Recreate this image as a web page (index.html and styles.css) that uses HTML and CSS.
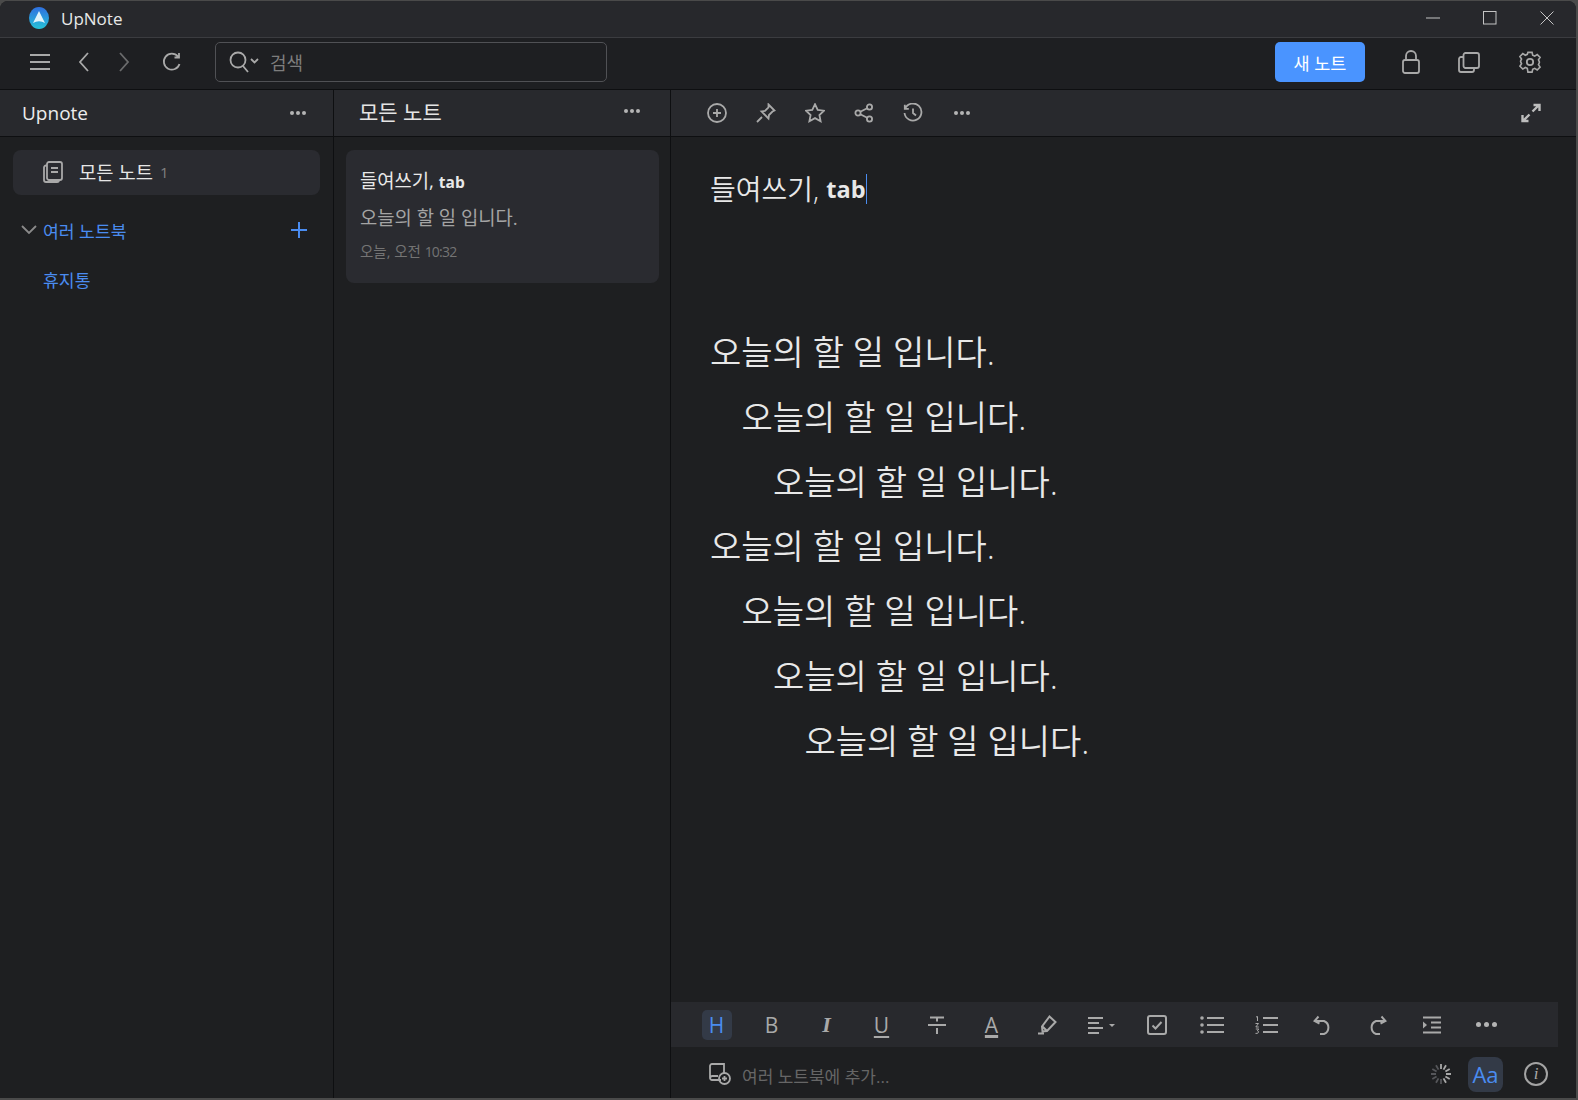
FILE: index.html
```html
<!DOCTYPE html>
<html lang="ko">
<head>
  <meta charset="UTF-8">
  <title>UpNote</title>
  <link rel="stylesheet" href="styles.css">
</head>
<body>
  <div class="window">
    <div class="titlebar">
      <svg class="logo" width="20" height="22" viewBox="0 0 20 22">
        <defs>
          <linearGradient id="logoBg" x1="0" y1="0" x2="0" y2="1">
            <stop offset="0" stop-color="#2f6fe0"/>
            <stop offset="1" stop-color="#27c3d8"/>
          </linearGradient>
        </defs>
        <ellipse cx="10" cy="11" rx="10" ry="11" fill="url(#logoBg)"/>
        <path d="M10 4 L16 16 Q10 12.5 4 16 Z" fill="#dff3fb"/>
      </svg>
      <span class="app-name">UpNote</span>
      <div class="win-controls">
        <svg width="14" height="14" viewBox="0 0 14 14"><path d="M0 7h14"/></svg>
        <svg width="14" height="14" viewBox="0 0 14 14"><rect x=".5" y=".5" width="12.5" height="12.5"/></svg>
        <svg width="14" height="14" viewBox="0 0 14 14"><path d="M.5.5l13 13M13.500.5l-13 13"/></svg>
      </div>
    </div>

    <div class="toolbar">
      <div class="nav-icons">
        <svg width="20" height="18" viewBox="0 0 20 18"><path d="M0 2h20M0 9h20M0 16h20"/></svg>
        <svg class="nav-back" width="12" height="20" viewBox="0 0 12 20"><path d="M10 1L2 10l8 9"/></svg>
        <svg class="nav-fwd" width="12" height="20" viewBox="0 0 12 20"><path d="M2 1l8 9-8 9"/></svg>
        <svg class="nav-reload" width="20" height="20" viewBox="0 0 20 20"><path d="M17.500 12a8 8 0 1 1-1.500-7.500M17 1v4.500h-4.500"/></svg>
      </div>
      <div class="search">
        <svg width="30" height="22" viewBox="0 0 30 22"><circle cx="9" cy="9" r="7.500"/><path d="M14 15l5 6M22 8l3.500 3.500L29 8"/></svg>
        <span>검색</span>
      </div>
      <button class="new-note">새 노트</button>
      <div class="tool-icons">
        <svg width="18" height="24" viewBox="0 0 18 24"><rect x="1" y="10" width="16" height="13" rx="2"/><path d="M4 10V6a5 5 0 0 1 10 0v4"/></svg>
        <svg width="22" height="21" viewBox="0 0 22 21"><rect x="5.500" y="1" width="15.500" height="15" rx="2"/><path d="M5.500 5H3a2 2 0 0 0-2 2v11a2 2 0 0 0 2 2h11a2 2 0 0 0 2-2v-2"/></svg>
        <svg width="24" height="24" viewBox="0 0 24 24"><circle cx="12" cy="12" r="3.200"/><path d="M9.700 1.500h4.600l.7 3.200 2.200 1 2.800-1.800 3.200 3.200-1.800 2.800 1 2.200 0 .4v0l0 .4-1 2.200 1.800 2.800-3.200 3.200-2.800-1.800-2.200 1-.7 3.200H9.700L9 19.300l-2.200-1L4 20.100.8 16.900l1.800-2.800-1-2.200V11.100l1-2.200L.8 6.100 4 2.900l2.800 1.800 2.200-1z" transform="translate(1.200 1) scale(.9)"/></svg>
      </div>
    </div>

    <div class="main">
      <aside class="sidebar">
        <div class="pane-head">
          <span class="brand">Upnote</span>
          <span class="dots"><i></i><i></i><i></i></span>
        </div>
        <div class="side-body">
          <div class="side-item">
            <svg width="20" height="22" viewBox="0 0 20 22"><rect x="4" y="1" width="15" height="18" rx="2"/><path d="M4 4.500H3a2 2 0 0 0-2 2V19a2 2 0 0 0 2 2h11a2 2 0 0 0 2-2M8 7h7M8 11h7"/></svg>
            <span>모든 노트</span>
            <em>1</em>
          </div>
          <div class="notebooks">
            <svg class="chev" width="16" height="10" viewBox="0 0 16 10"><path d="M1 1l7 7 7-7"/></svg>
            <span>여러 노트북</span>
            <svg class="plus" width="16" height="16" viewBox="0 0 16 16"><path d="M8 0v16M0 8h16"/></svg>
          </div>
          <div class="trash">휴지통</div>
        </div>
      </aside>

      <section class="list">
        <div class="pane-head list-head">
          <span class="list-title">모든 노트</span>
          <span class="dots"><i></i><i></i><i></i></span>
        </div>
        <div class="list-body">
          <div class="note-card">
            <div class="note-title">들여쓰기, <b>tab</b></div>
            <div class="note-sub">오늘의 할 일 입니다.</div>
            <div class="note-date">오늘, 오전 <span>10:32</span></div>
          </div>
        </div>
      </section>

      <section class="editor">
        <div class="pane-head editor-head">
          <svg width="20" height="20" viewBox="0 0 20 20"><circle cx="10" cy="10" r="9"/><path d="M10 6v8M6 10h8"/></svg>
          <svg width="20" height="20" viewBox="0 0 20 20"><path d="M12.500 1.500l6 6-2 1-3.500 3.500-.5 3.500-7-7 3.500-.5 3.500-3.500zM6 14l-5 5"/></svg>
          <svg width="20" height="20" viewBox="0 0 20 20"><path d="M10 1.200l2.700 5.700 6.300.8-4.600 4.300 1.200 6.200-5.600-3.100-5.600 3.100 1.200-6.200L1 7.700l6.300-.8z"/></svg>
          <svg width="20" height="20" viewBox="0 0 20 20"><circle cx="4" cy="10" r="2.600"/><circle cx="15.500" cy="4" r="2.600"/><circle cx="15.500" cy="16" r="2.600"/><path d="M6.300 8.800l6.900-3.600M6.300 11.200l6.900 3.600"/></svg>
          <svg width="20" height="20" viewBox="0 0 20 20"><path d="M2.200 5.500A8.500 8.500 0 1 1 1.500 10M1.800 1.800v4h4M10 5.500V10l3 2.500"/></svg>
          <span class="dots"><i></i><i></i><i></i></span>
          <svg class="expand" width="20" height="20" viewBox="0 0 20 20"><path d="M11.500 8.500l6-6M12.500 2h6v6M8.500 11.500l-6 6M7.500 18h-6v-6"/></svg>
        </div>

        <div class="doc">
          <div class="doc-title">들여쓰기, <b>tab</b><span class="caret"></span></div>
          <div class="doc-body">
            <p>오늘의 할 일 입니다.</p>
            <p class="in1">오늘의 할 일 입니다.</p>
            <p class="in2">오늘의 할 일 입니다.</p>
            <p>오늘의 할 일 입니다.</p>
            <p class="in1">오늘의 할 일 입니다.</p>
            <p class="in2">오늘의 할 일 입니다.</p>
            <p class="in3">오늘의 할 일 입니다.</p>
          </div>
        </div>

        <div class="format-bar">
          <span class="fmt active">H</span>
          <span class="fmt">B</span>
          <span class="fmt ital">I</span>
          <span class="fmt under">U</span>
          <span class="fmt"><svg width="20" height="20" viewBox="0 0 20 20"><path d="M3 2.500h14M10 2.500v4M1 10h18M10 13v6"/></svg></span>
          <span class="fmt color-a">A</span>
          <span class="fmt"><svg width="20" height="20" viewBox="0 0 20 20"><path d="M12.500 1.500l6 5.500-8.500 9-4.500.5-.5-5zM5.500 11.500l5 5M1 18.500h6"/></svg></span>
          <span class="fmt"><svg width="28" height="18" viewBox="0 0 28 18"><path d="M0 2h15M0 7h11M0 12h15M0 17h11"/><path class="solid" d="M21 8h6l-3 3z"/></svg></span>
          <span class="fmt"><svg width="20" height="20" viewBox="0 0 20 20"><rect x="1" y="1" width="18" height="18" rx="2"/><path d="M5.500 10.500l3 3 6-6.500"/></svg></span>
          <span class="fmt"><svg width="24" height="18" viewBox="0 0 24 18"><circle class="solid" cx="2" cy="2" r="1.800"/><circle class="solid" cx="2" cy="9" r="1.800"/><circle class="solid" cx="2" cy="16" r="1.800"/><path d="M7 2h17M7 9h17M7 16h17"/></svg></span>
          <span class="fmt"><svg width="24" height="18" viewBox="0 0 24 18"><path d="M8 2h15M8 9h15M8 16h15"/><path class="thin" d="M1 1l1.500-.5V5M.5 7.500h3L.8 11h3M.8 13h3l-1.500 1.800c2 0 2 3-1.800 2.600"/></svg></span>
          <span class="fmt undo"><svg width="20" height="20" viewBox="0 0 20 20"><path d="M5.500 1.500L1.500 6l5 2.500M2 6h9a7 7 0 0 1 0 13H7"/></svg></span>
          <span class="fmt"><svg width="20" height="20" viewBox="0 0 20 20"><path d="M14.500 1.500l4 4.500-5 2.500M18 6H9a7 7 0 0 0 0 13h4"/></svg></span>
          <span class="fmt"><svg width="18" height="18" viewBox="0 0 18 18"><path d="M0 1.500h18M8 6.500h10M8 11.500h10M0 16.500h18"/><path class="solid" d="M0 5.500l4 3.500-4 3.500z"/></svg></span>
          <span class="fmt"><span class="dots big"><i></i><i></i><i></i></span></span>
        </div>

        <div class="status-bar">
          <svg width="22" height="22" viewBox="0 0 22 22"><path d="M12 17H3a2 2 0 0 1-2-2V3a2 2 0 0 1 2-2h12v10M1 15a2.500 2.500 0 0 1 2-2h6"/><circle cx="15.500" cy="15.500" r="5.500"/><path d="M15.500 13v5M13 15.500h5"/></svg>
          <span class="status-text">여러 노트북에 추가...</span>
          <svg class="spinner" width="22" height="22" viewBox="0 0 22 22"><path d="M11 1v5M16 2.300l-2.500 4.300M19.700 6l-4.300 2.500M21 11h-5M19.700 16l-4.300-2.500M16 19.700l-2.500-4.300"/><path class="faint" d="M11 21v-5M6 19.700l2.500-4.300M2.300 16l4.300-2.500M1 11h5M2.300 6l4.300 2.500M6 2.300l2.500 4.300"/></svg>
          <span class="aa">Aa</span>
          <span class="info">i</span>
        </div>
      </section>
    </div>
  </div>
</body>
</html>
```

FILE: styles.css
```css
* {
  box-sizing: border-box;
}

html, body {
  height: 100%;
}

body {
  margin: 0;
  background: #4a4a4a;
  font-family: "Open Sans", "Noto Sans CJK KR", sans-serif;
  overflow: hidden;
}

svg {
  fill: none;
  stroke: #a9a9a9;
  stroke-width: 1.800;
  flex: none;
  display: block;
}

svg .solid {
  fill: #a9a9a9;
  stroke: none;
}

svg .thin {
  stroke-width: 1;
}

.window {
  width: 1576px;
  height: 1097px;
  margin-top: 1px;
  background: #1e1f21;
  border-radius: 8px 8px 0 0;
  display: flex;
  flex-direction: column;
  overflow: hidden;
}

/* title bar */
.titlebar {
  height: 37px;
  flex: none;
  display: flex;
  align-items: center;
  padding: 0 0 2px 29px;
  background: #27282c;
  border-bottom: 1px solid #3b3c40;
}

.logo {
  stroke: none;
}

.app-name {
  margin-left: 12px;
  font-size: 17px;
  color: #e8e8e8;
}

.win-controls {
  margin-left: auto;
  display: flex;
  gap: 43px;
  padding-right: 22px;
}

.win-controls svg {
  stroke: #c4c4c4;
  stroke-width: 1;
}

/* top toolbar */
.toolbar {
  height: 52px;
  flex: none;
  display: flex;
  align-items: center;
  background: #1e1f22;
  border-bottom: 1px solid #0e0f11;
  padding: 0 0 3px 30px;
}

.nav-icons {
  display: flex;
  align-items: center;
}

.nav-back {
  margin-left: 28px;
}

.nav-fwd {
  margin-left: 28px;
  opacity: .55;
}

.nav-reload {
  margin-left: 32px;
}

.search {
  width: 392px;
  height: 40px;
  margin-left: 33px;
  padding-left: 13px;
  display: flex;
  align-items: center;
  gap: 11px;
  border: 1px solid #505155;
  border-radius: 5px;
  font-size: 18px;
  color: #7d7d7d;
}

.new-note {
  margin-left: auto;
  width: 90px;
  height: 40px;
  border: none;
  border-radius: 5px;
  background: #4a94ff;
  color: #fff;
  font: inherit;
  font-size: 17.500px;
}

.tool-icons {
  display: flex;
  align-items: center;
  margin-left: 37px;
  padding-right: 34px;
  gap: 38px;
}

/* panes */
.main {
  flex: 1;
  display: flex;
  min-height: 0;
}

.pane-head {
  height: 47px;
  flex: none;
  display: flex;
  align-items: center;
  background: #28292d;
  border-bottom: 1px solid #0e0f11;
}

.dots {
  display: flex;
  gap: 2px;
  margin-left: auto;
}

.dots i {
  width: 4px;
  height: 4px;
  border-radius: 50%;
  background: #b4b4b4;
}

.dots.big {
  margin: 0;
  gap: 3px;
}

.dots.big i {
  width: 5px;
  height: 5px;
}

.sidebar {
  width: 334px;
  flex: none;
  display: flex;
  flex-direction: column;
  border-right: 1px solid #0e0f11;
}

.sidebar .pane-head {
  padding: 0 27px 0 22px;
}

.brand {
  font-size: 19px;
  color: #ececec;
}

.side-body {
  padding: 13px 13px;
}

.side-item {
  height: 45px;
  display: flex;
  align-items: center;
  padding: 0 0 2px 30px;
  background: #2a2b30;
  border-radius: 8px;
  color: #e6e6e6;
  font-size: 18.800px;
}

.side-item span {
  margin-left: 16px;
}

.side-item em {
  margin-left: 7px;
  font-style: normal;
  font-size: 15px;
  color: #808080;
}

.notebooks {
  display: flex;
  align-items: center;
  margin-top: 23px;
  padding: 0 13px 0 8px;
  height: 24px;
  font-size: 17.200px;
  color: #4a8cf0;
}

.notebooks .chev {
  stroke: #8a8a8a;
}

.notebooks span {
  margin-left: 6px;
}

.plus {
  margin-left: auto;
  stroke: #4a8cf0;
  stroke-width: 2;
}

.trash {
  margin: 25px 0 0 30px;
  font-size: 17.200px;
  color: #4a8cf0;
}

.list {
  width: 337px;
  flex: none;
  display: flex;
  flex-direction: column;
  border-right: 1px solid #0e0f11;
}

.list-head {
  padding: 0 30px 4px 25px;
}

.list-title {
  font-size: 21px;
  color: #e4e4e4;
}

.list-body {
  padding: 13px 11px 0 12px;
}

.note-card {
  height: 133px;
  padding: 17px 14px;
  background: #2a2b30;
  border-radius: 8px;
}

.note-title {
  font-size: 18.800px;
  line-height: 28px;
  color: #e8e8e8;
}

.note-title b {
  font-size: 15.500px;
  font-weight: 700;
}

.note-sub {
  margin-top: 8px;
  font-size: 18.800px;
  line-height: 28px;
  color: #a4a4a4;
}

.note-date {
  margin-top: 10px;
  font-size: 14.500px;
  line-height: 20px;
  color: #747474;
}

.note-date span {
  font-size: 14px;
  letter-spacing: -.8px;
}

.editor {
  flex: 1;
  min-width: 0;
  display: flex;
  flex-direction: column;
}

.editor-head {
  padding: 0 35px 0 36px;
  gap: 29px;
}

.editor-head .dots {
  margin-left: 0;
  padding-left: 2px;
}

.editor-head .expand {
  margin-left: auto;
  stroke: #bdbdbd;
  stroke-width: 2.400;
}

.doc {
  flex: 1;
  padding: 32px 39px;
  color: #e8e8e8;
}

.doc-title {
  font-size: 28px;
  line-height: 40px;
  font-weight: 350;
  display: flex;
  align-items: center;
  white-space: pre;
}

.doc-title b {
  font-size: 23.500px;
  font-weight: 700;
}

.caret {
  width: 1px;
  height: 30px;
  background: #4a8cf0;
}

.doc-body {
  margin-top: 111px;
}

.doc-body p {
  margin: 0;
  font-size: 34px;
  line-height: 64.800px;
  font-weight: 350;
}

.doc-body .in1 {
  padding-left: 31.500px;
}

.doc-body .in2 {
  padding-left: 63px;
}

.doc-body .in3 {
  padding-left: 94.500px;
}

/* bottom bars */
.format-bar {
  width: 887px;
  height: 45px;
  flex: none;
  display: flex;
  align-items: center;
  padding-left: 18px;
  background: #28292d;
}

.format-bar svg {
  stroke-width: 2;
}

.format-bar svg .thin {
  stroke-width: 1;
}

.fmt {
  width: 55px;
  height: 30px;
  flex: none;
  display: flex;
  align-items: center;
  justify-content: center;
  font-size: 21px;
  color: #a9a9a9;
}

.fmt.active {
  width: 30px;
  margin: 0 12.500px;
  border-radius: 5px;
  background: #333a47;
  color: #4a8cf0;
}

.fmt.ital {
  font-style: italic;
  font-weight: 700;
  font-family: "Liberation Serif", serif;
  font-size: 22px;
}

.fmt.under {
  text-decoration: underline;
  text-underline-offset: 3px;
  text-decoration-thickness: 2px;
}

.fmt.color-a {
  text-decoration: underline;
  text-decoration-thickness: 3px;
  text-underline-offset: 2px;
}

.fmt.undo {
  padding-left: 3px;
}

.status-bar {
  height: 51px;
  flex: none;
  display: flex;
  align-items: center;
  padding: 3px 28px 0 38px;
}

.status-text {
  margin: 3px 0 0 11px;
  font-size: 17px;
  color: #666;
}

.spinner {
  margin-left: auto;
  stroke-width: 1.800;
  stroke: #a9a9a9;
}

.spinner .faint {
  stroke: #55565a;
}

.aa {
  width: 35px;
  height: 35px;
  margin-left: 16px;
  display: flex;
  align-items: center;
  justify-content: center;
  border-radius: 8px;
  background: #333a47;
  color: #4a8cf0;
  font-size: 22px;
}

.info {
  width: 24px;
  height: 24px;
  margin-left: 21px;
  display: flex;
  align-items: center;
  justify-content: center;
  border: 2px solid #a4a4a4;
  border-radius: 50%;
  color: #a9a9a9;
  font-family: "Liberation Serif", serif;
  font-style: italic;
  font-size: 17px;
}
```
